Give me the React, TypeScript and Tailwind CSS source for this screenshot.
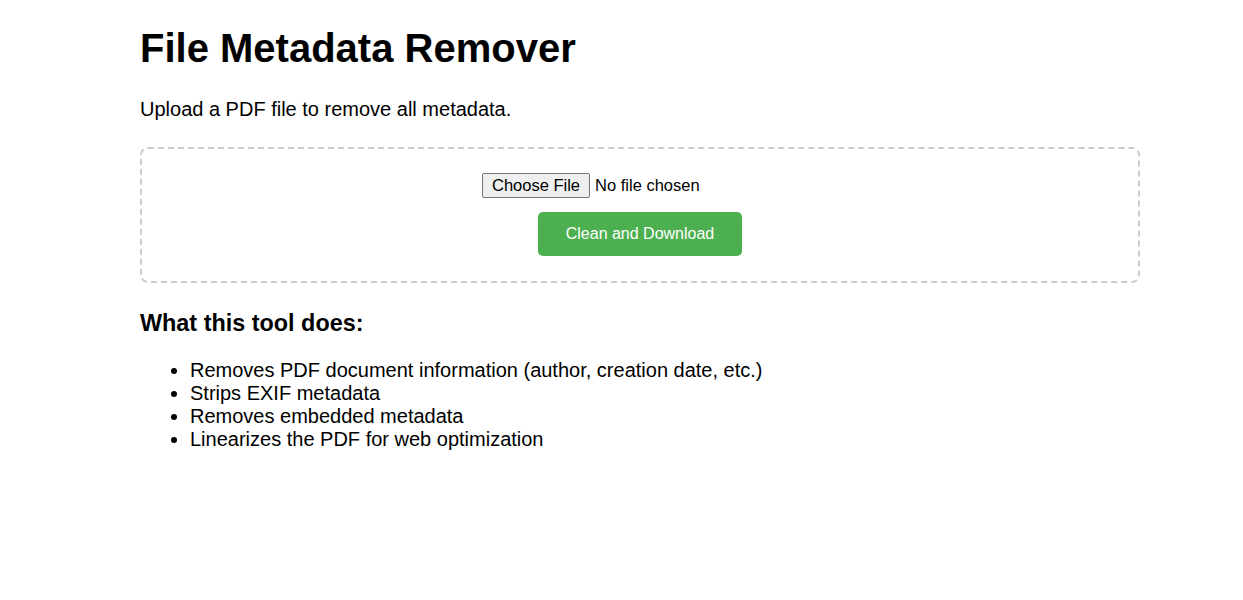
const FEATURES = [
  'Removes PDF document information (author, creation date, etc.)',
  'Strips EXIF metadata',
  'Removes embedded metadata',
  'Linearizes the PDF for web optimization',
];

export default function App() {
  return (
    <div
      className="min-h-screen bg-white text-black"
      style={{ fontFamily: "Arial, 'Liberation Sans', sans-serif" }}
    >
      <div className="ml-[140px] w-[1000px] pt-[25px]">
        <h1 className="text-[40px] font-bold leading-[46px]">File Metadata Remover</h1>

        <p className="mt-[27px] text-[20px] leading-[23px]">
          Upload a PDF file to remove all metadata.
        </p>

        {/* Upload zone */}
        <div className="mt-[26px] h-[136px] rounded-lg border-2 border-dashed border-[#ccc] pt-[24px]">
          <div className="flex items-center pl-[340px] text-[16.5px]">
            <button className="h-[25px] rounded-[2px] border border-[#767676] bg-[#efefef] px-[9px] leading-[23px] text-black">
              Choose File
            </button>
            <span className="ml-[5px]">No file chosen</span>
          </div>
          <div className="mt-[14px] flex justify-center">
            <button className="h-[44px] w-[204px] rounded-[5px] bg-[#4CAF50] text-[16px] text-white">
              Clean and Download
            </button>
          </div>
        </div>

        <h3 className="mt-[27px] text-[23.4px] font-bold leading-[27px]">What this tool does:</h3>

        <ul className="mt-[22px] list-disc pl-[50px] text-[20px] leading-[23px]">
          {FEATURES.map((f) => (
            <li key={f}>{f}</li>
          ))}
        </ul>
      </div>
    </div>
  );
}
